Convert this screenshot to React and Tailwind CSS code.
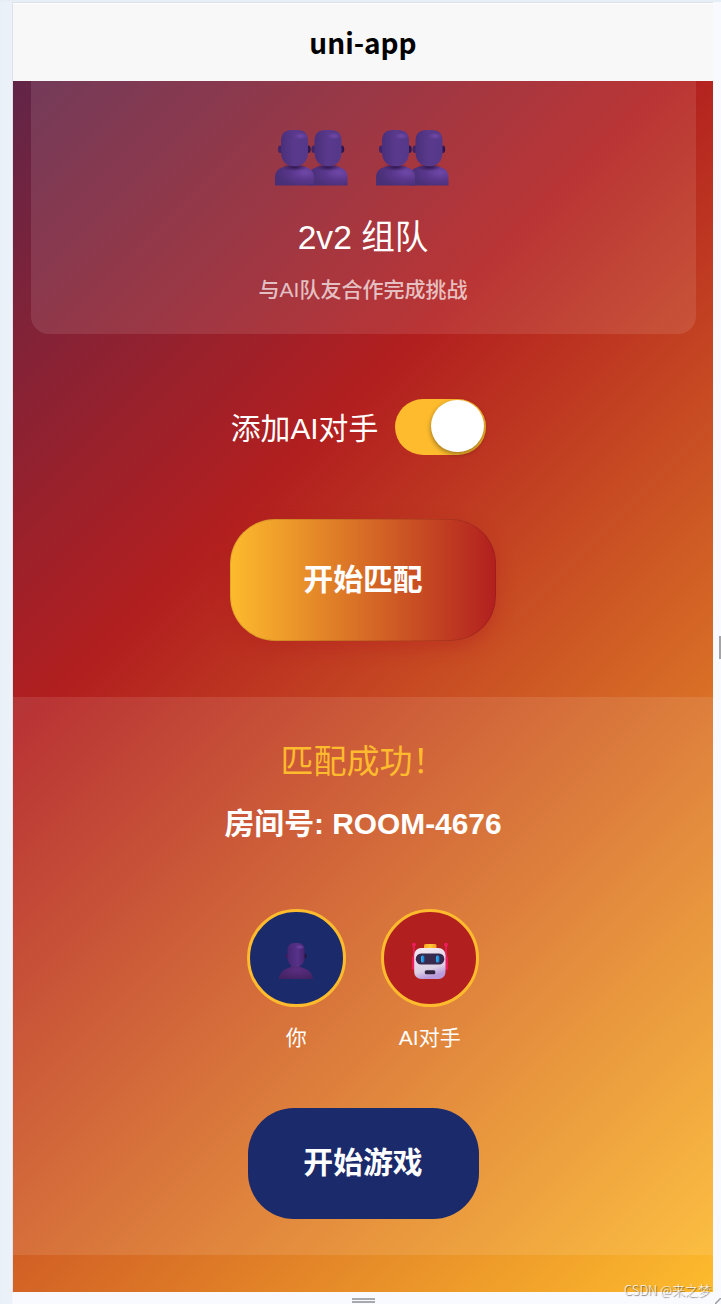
import React, { useState } from 'react';

const players = [
  { id: 'me', label: '你', color: 'bg-[#1b2a6b]' },
  { id: 'ai', label: 'AI对手', color: 'bg-[#b21f1f]' },
];

const Gradients = () => (
  <svg width="0" height="0" className="absolute">
    <defs>
      <linearGradient id="head" x1="0" x2="1">
        <stop offset="0" stopColor="#4a2f7a" />
        <stop offset="0.5" stopColor="#59398c" />
        <stop offset="1" stopColor="#553889" />
      </linearGradient>
      <radialGradient id="shine">
        <stop offset="0" stopColor="#7249a8" />
        <stop offset="1" stopColor="#7249a8" stopOpacity="0" />
      </radialGradient>
      <radialGradient id="body" cx="0.78" cy="0.35" r="0.75">
        <stop offset="0" stopColor="#7048a8" />
        <stop offset="0.5" stopColor="#59378c" />
        <stop offset="1" stopColor="#482f76" />
      </radialGradient>
      <radialGradient id="neck">
        <stop offset="0" stopColor="#30164f" />
        <stop offset="1" stopColor="#30164f" stopOpacity="0" />
      </radialGradient>
      <linearGradient id="soloHead" x1="0" x2="1">
        <stop offset="0" stopColor="#452772" />
        <stop offset="0.6" stopColor="#57328a" />
        <stop offset="1" stopColor="#45246d" />
      </linearGradient>
      <radialGradient id="soloBody" cx="0.55" cy="0.4" r="0.65">
        <stop offset="0" stopColor="#5b2d81" />
        <stop offset="1" stopColor="#432363" />
      </radialGradient>
      <linearGradient id="robotFace" x1="0" y1="0" x2="0.3" y2="1">
        <stop offset="0" stopColor="#f3eaf5" />
        <stop offset="0.75" stopColor="#dcd0e4" />
        <stop offset="1" stopColor="#b99adb" />
      </linearGradient>
      <linearGradient id="robotEye" x1="0" x2="1">
        <stop offset="0" stopColor="#35b4f4" />
        <stop offset="1" stopColor="#1379cb" />
      </linearGradient>
      <linearGradient id="robotCap" x1="0" x2="1">
        <stop offset="0" stopColor="#ffa51f" />
        <stop offset="0.5" stopColor="#ffcb37" />
        <stop offset="1" stopColor="#f39a22" />
      </linearGradient>
    </defs>
  </svg>
);

const Bust = ({ x }) => (
  <g transform={`translate(${x} 0)`}>
    <ellipse cx="5.3" cy="19.2" rx="2.3" ry="3.8" fill="#412568" />
    <ellipse cx="33.4" cy="19.2" rx="2.3" ry="3.8" fill="#30164f" />
    <path d="M0 55V47C0 39 8 35.5 19.5 35.5S39 39 39 47V55Q39 55.5 38 55.5H1Q0 55.5 0 55Z" fill="url(#body)" />
    <ellipse cx="19.5" cy="37" rx="12" ry="4" fill="url(#neck)" />
    <path d="M6 11Q6 0 17 0H22Q33 0 33 11V22C33 31 28 36.3 19.5 36.3S6 31 6 22Z" fill="url(#head)" />
    <ellipse cx="25.5" cy="6" rx="7" ry="3.5" fill="url(#shine)" />
  </g>
);

const TeamIcon = () => (
  <svg width="73" height="56" viewBox="0 0 73 56">
    <Bust x={33.5} />
    <Bust x={0} />
  </svg>
);

const UserIcon = () => (
  <svg width="36" height="38" viewBox="0 0 36 38">
    <ellipse cx="9.2" cy="14" rx="1.8" ry="2.5" fill="#3a1c60" />
    <ellipse cx="27" cy="14" rx="1.6" ry="2.5" fill="#281347" />
    <path d="M0.5 37C2 29 8 26.5 13 25V22H22V25C28 26.5 34 29 35 37Z" fill="url(#soloBody)" />
    <path d="M9.5 8Q9.5 1 16 1H20Q26.5 1 26.5 8V16C26.5 21 23 24.5 18 24.5S9.5 21 9.5 16Z" fill="url(#soloHead)" />
    <ellipse cx="22" cy="5" rx="4.5" ry="2.3" fill="url(#shine)" />
  </svg>
);

const RobotIcon = () => (
  <svg width="38" height="38" viewBox="0 0 38 38">
    <g fill="#ed1d5e">
      <circle cx="2.9" cy="2.8" r="2" />
      <circle cx="35" cy="2.8" r="2" />
      <rect x="2.1" y="3" width="1.7" height="15" />
      <rect x="34.2" y="3" width="1.7" height="15" />
      <rect x="1" y="14" width="3.5" height="14" rx="1.7" />
      <rect x="33.6" y="14" width="3.3" height="14" rx="1.6" />
    </g>
    <rect x="13" y="2" width="12.5" height="5" rx="1.5" fill="url(#robotCap)" />
    <rect x="3.2" y="6" width="31.3" height="31" rx="7" fill="url(#robotFace)" />
    <rect x="4.8" y="11.5" width="28.5" height="11" rx="5.3" fill="#382a4e" />
    <rect x="10" y="13.5" width="3.4" height="7" rx="1.5" fill="url(#robotEye)" />
    <rect x="25" y="13.5" width="3.4" height="7" rx="1.5" fill="url(#robotEye)" />
    <rect x="13.8" y="28.2" width="10.5" height="4" rx="1.5" fill="#30263f" />
  </svg>
);

const App = () => {
  const [aiEnabled, setAiEnabled] = useState(true);

  return (
    <div className="relative flex flex-col w-[721px] h-[1304px] overflow-hidden bg-[linear-gradient(90deg,#e9f0f8,#edf2fa_12px,#f9faff_13px)] font-['Liberation_Sans','Noto_Sans_CJK_SC',sans-serif] text-white">
      <Gradients />
      <div className="h-0.5 shrink-0 bg-[#e8eef5]"></div>

      {/* Phone screen */}
      <div className="ml-3 w-[701px] h-[1290px] border-t border-l border-[#dde2e9] flex flex-col shrink-0">
        <header className="h-[78px] shrink-0 border-t border-white bg-[#f8f8f8] flex items-center justify-center pb-0.5">
          <h1 className="font-['Noto_Sans_CJK_SC',sans-serif] text-[28px] leading-10 font-bold text-black">uni-app</h1>
        </header>

        <main className="flex-1 flex flex-col items-center bg-[linear-gradient(135deg,#1a2a6c,#b21f1f,#fdbb2d)] bg-[length:700px_1800px] bg-bottom">
          {/* Mode card */}
          <section className="w-[665px] h-[253px] shrink-0 rounded-b-[18px] bg-white/10 flex flex-col items-center pt-[49px]">
            <div className="flex gap-7 -ml-[3px]">
              <TeamIcon />
              <TeamIcon />
            </div>
            <h2 className="mt-7 text-[33.6px] leading-[48px]">2v2 组队</h2>
            <p className="mt-3 text-[21px] leading-8 font-medium text-white/70">与AI队友合作完成挑战</p>
          </section>

          <div className="mt-[65px] h-14 flex items-center gap-[17px] -ml-[9px]">
            <span className="text-[29.87px] leading-10 mt-1">添加AI对手</span>
            <button
              onClick={() => setAiEnabled(!aiEnabled)}
              className={`w-[91px] h-14 rounded-full flex items-start px-0.5 pt-px ${aiEnabled ? 'justify-end bg-[#fdbb2d]' : 'justify-start bg-gray-300'}`}
            >
              <span className="w-[53px] h-[52px] rounded-full bg-white shadow-[0_2px_5px_rgba(0,0,0,0.4)]"></span>
            </button>
          </div>

          <button className="mt-16 w-[266px] h-[122px] shrink-0 rounded-[45px] border border-black/10 bg-[linear-gradient(90deg,#fdbb2d,#b21f1f)] bg-origin-border shadow-[0_7px_18px_rgba(178,31,31,0.4)] text-[29.87px] font-bold">
            开始匹配
          </button>

          {/* Match result */}
          <section className="mt-14 w-full h-[558px] shrink-0 bg-white/10 flex flex-col items-center pt-[41px]">
            <h2 className="text-[33px] leading-[48px] text-[#fdbb2d]">匹配成功！</h2>
            <p className="mt-4 text-[29.87px] leading-[44px] font-bold">房间号: ROOM-4676</p>

            <div className="mt-[63px] flex gap-[35px]">
              {players.map((player) => (
                <div key={player.id} className="w-[98.5px] flex flex-col items-center">
                  <div className={`w-full h-[98px] rounded-full border-3 border-[#fdbb2d] flex items-center justify-center pt-1.5 ${player.color}`}>
                    {player.id === 'me' ? <UserIcon /> : <RobotIcon />}
                  </div>
                  <span className="mt-[15px] text-[21px] leading-8 whitespace-nowrap">{player.label}</span>
                </div>
              ))}
            </div>

            <button className="mt-[54px] w-[231px] h-[111px] shrink-0 rounded-[46px] bg-[#1b2a6b] text-[29.87px] font-bold">
              开始游戏
            </button>
          </section>
        </main>
      </div>

      {/* Resize handles */}
      <div className="absolute left-[352px] top-[1298px] w-[23px] h-[5px] border-y-2 border-[#a9a9ad]"></div>
      <div className="absolute left-[719px] top-[636px] w-0.5 h-[23px] bg-[#a3a3a6]"></div>
      <svg className="absolute right-0 bottom-0" width="6" height="6" viewBox="0 0 6 6">
        <path d="M0 6L6 0" stroke="#9a9a9e" strokeWidth="1.5" />
      </svg>

      <span className="absolute left-[624px] top-[1280px] text-[13px] leading-5 whitespace-nowrap font-['Noto_Sans_CJK_SC',sans-serif] font-light text-white/90 [text-shadow:1px_1px_1px_rgba(70,60,50,0.75)]">
        CSDN @来之梦
      </span>
    </div>
  );
};

export default App;
